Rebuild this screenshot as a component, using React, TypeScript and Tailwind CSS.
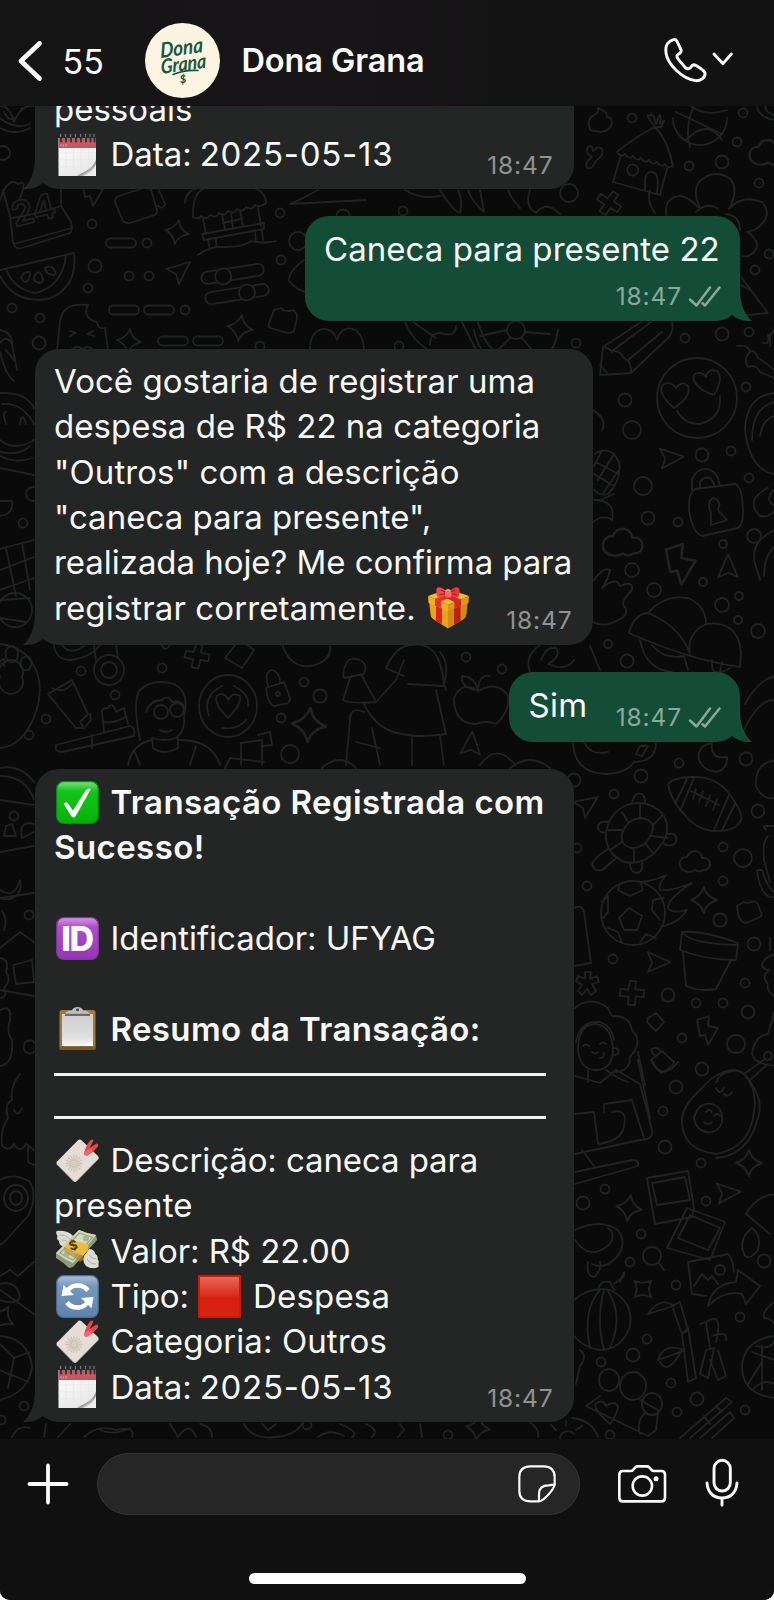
import React from "react";

/* ---------- wallpaper doodles ---------- */

const rings: [number, number, number][] = [
  [632, 118, 4.5], [743, 113, 4.5], [737, 142, 4.5], [689, 166, 4.5], [722, 162, 6.5], [759, 183, 4.5],
  [569, 193, 9], [769, 254, 4.5], [755, 270, 4.5], [722, 334, 6.5], [685, 338, 4.5], [749, 332, 4.5],
  [625, 400, 6.5], [746, 387, 4.5], [632, 430, 9], [576, 343, 4.5], [403, 211, 4.5], [343, 216, 6.5],
  [3, 153, 7], [92, 224, 4.5], [95, 266, 6.5], [88, 288, 4.5], [129, 276, 4.5], [149, 276, 4.5],
  [147, 243, 4.5], [185, 310, 4.5], [12, 308, 4.5], [40, 318, 4.5], [39, 343, 6.5], [280, 213, 4.5],
  [281, 260, 4.5], [298, 241, 9], [399, 346, 4.5], [260, 346, 4.5],
  [702, 455, 6.5], [731, 451, 4.5], [643, 486, 9], [749, 478, 4.5], [648, 518, 6.5], [678, 522, 4.5],
  [754, 536, 7], [723, 544, 4], [632, 570, 7], [703, 582, 4], [654, 590, 7], [722, 605, 7], [739, 596, 4],
  [738, 620, 4], [758, 631, 7], [608, 644, 4], [627, 661, 6.5], [466, 657, 4.5], [502, 669, 4.5],
  [304, 682, 4.5], [320, 696, 6.5], [281, 718, 4.5], [162, 668, 4.5], [81, 671, 4.5], [115, 695, 4.5],
  [46, 719, 4.5], [29, 735, 4.5], [23, 523, 4.5], [33, 494, 7], [290, 754, 9],
  [679, 763, 4.5], [641, 776, 6.5], [746, 759, 6.5], [614, 794, 4.5], [758, 811, 6.5], [723, 847, 4.5],
  [743, 858, 9], [723, 881, 4.5], [720, 920, 6.5], [587, 886, 4.5], [577, 848, 4.5], [613, 959, 4.5],
  [668, 995, 6.5], [696, 1003, 4.5], [723, 1003, 4.5], [745, 983, 4.5], [754, 944, 6.5], [748, 1012, 6.5],
  [682, 1038, 4.5], [736, 1044, 9], [702, 1069, 6.5], [574, 780, 6.5], [14, 816, 4.5], [29, 915, 4.5],
  [665, 1147, 6.5], [701, 1163, 4.5], [676, 1087, 6.5], [663, 1111, 4.5], [583, 1203, 6.5], [605, 1189, 4.5],
  [706, 1201, 4.5], [641, 1234, 4.5], [630, 1262, 4.5], [676, 1285, 4.5], [764, 1261, 6.5], [740, 1317, 4.5],
  [647, 1339, 4.5], [633, 1355, 6.5], [601, 1362, 4.5], [671, 1383, 4.5], [697, 1399, 6.5], [677, 1412, 4.5],
  [745, 1410, 4.5], [24, 1406, 4.5], [1, 1420, 4.5], [307, 1425, 4.5], [448, 1435, 4.5], [610, 1435, 4.5],
  [720, 1270, 5], [632.7, 170, 5.5], [30, 1047, 6.5],
];

const stars: [number, number, number, number][] = [
  [177, 232, 12, 10], [129, 341, 12, 5], [240, 328, 13, 8], [309, 725, 17, 5], [704, 900, 13, 0],
  [749, 1163, 13, 0], [629, 1208, 13, 8], [643, 1289, 12, 45], [478, 1428, 12, 8], [2, 1318, 13, 30],
];

const planes: [number, number, number][] = [
  [178, 272, 0], [668, 458, 35], [728, 570, -50], [585, 806, 5], [655, 962, 40], [725, 1193, 35], [471, 747, -45],
];

const pills: [number, number][] = [[106, 243], [109, 310], [144, 310], [158, 341], [193, 341]];

const bolts: [number, number, number][] = [[92, 192, 1], [680, 565, 1.4], [707, 1031, 1]];

const clouds: [number, number, number][] = [[768, 153, 1.2], [623, 543, 1.3], [695, 862, 1]];

const crosses: [number, number, number][] = [[609, 203, 35], [197, 656, 12], [632, 993, 5]];

const strokes: string[] = [
  // basketball
  "M673 118a27 27 0 1 0 54 0M676 112L722 134M700 96Q683 120 690 147M727 110Q705 118 688 104M722 140Q708 118 686 140",
  // hut
  "M617 152Q632 139 655 127Q668 140 673 167M617 152q4 6 8 2q4 6 8 2q4 6 8 2q4 6 8 2q4 6 8 2q4 6 8 2q4 6 8 1M621 155L613 182L660 195L667 169M645 190V178Q649 168 656 174Q659 180 657 193M655 127Q643 112 651 116Q652 110 656 124Q662 106 660 124Q668 116 661 127Z",
  // drop and bone
  "M590 129Q586 119 594 115Q599 113 598 108Q608 112 607 117Q614 118 611 126Q606 134 596 131Q590 131 590 129ZM588 147q4-3 5 4q5-6 9-2q3 5-6 12q-4 9-9 7q-3-5 5-11q-8-4-4-10",
  "M775 120Q760 118 757 107M775 116Q765 112 765 106",
  // flower
  "M700 208Q690 186 704 178Q716 170 729 178Q740 188 729 209M698 207Q680 188 668 202Q663 214 670 220M729 209Q742 194 762 202Q774 216 756 229Q744 233 748 232Q762 243 754 252Q748 258 742 256M696 212Q706 202 717 208M726 214q14 2 14 16",
  "M741 277L768 313L747 315M741 285L750 290",
  // pencil
  "M672 322Q674 330 669 337L631 373L600 375L603 347L641 322M651 322L612 351Q620 350 624 358Q632 362 631 373M662 332L628 360M603 347Q610 348 612 352M600 365L607 373",
  // love smiley
  "M657 398a40 40 0 1 0 80 0a40 40 0 1 0-80 0M674 408C662 398 658 388 664 384Q671 381 676 388Q682 380 688 386Q692 396 674 408ZM714 395C698 390 690 380 695 374Q702 371 706 377Q708 368 717 371Q724 378 714 395ZM677 411Q684 424 700 424Q722 418 720 396",
  // peppers and spiral
  "M737 346Q748 344 750 352Q743 358 748 367Q756 364 760 372L774 378M750 352Q754 348 758 358Q768 364 774 370M763 343Q770 345 768 335Q775 335 775 322M770 335V346",
  "M745 430Q746 396 774 393M752 440Q752 408 774 402M760 436Q762 420 774 416M745 430Q750 470 774 474",
  // chili and cloud above the first outgoing bubble
  "M440 190Q452 210 460 213Q463 200 458 190M468 190Q472 202 484 212L480 190M508 190Q512 200 520 208M530 190Q524 206 536 213Q546 200 560 214M655 213Q646 200 650 190M318 190Q300 200 290 204L366 200M405 190Q420 200 440 196",
  // left top
  "M0 118Q14 130 30 124M4 112Q12 128 22 108M0 106Q10 106 14 122Q22 104 33 106M0 128Q16 136 30 128M0 200Q8 176 18 184Q28 178 20 198",
  // desk calendar
  "M3 190L10 216L13 242Q15 250 22 248L70 233Q73 230 71 222L61 206V187M11 218Q30 216 61 206M14 244L72 228",
  // watermelon
  "M0 270L74 253Q78 288 48 299Q14 304 0 276M6 269Q14 290 36 293Q62 286 66 256M25 282q-6-3-2-8q5-3 7-2q0 9-5 10M40 283q-8-1-5-8q3-4 5-2q6 8 0 10M54 275q-8 0-9-7q3-2 7-1q6 6 2 8",
  "M119 196L150 186L157 210Q158 214 152 216L130 223Q124 224 122 219L115 202Q115 197 119 196ZM150 190q6-4 8-2l7 16q-2 6-7 2",
  // beach house
  "M193 217Q192 190 208 187M193 217q6 3 8-1q6 5 9-1q6 4 9-2q6 4 9-2q6 4 9-2q6 4 9-2q6 4 9-2q6 3 11-2Q266 192 254 188M203 219L206 234M258 208L261 226M202 234L264 223V229L204 240ZM208 240L210 250M216 238V247M255 230L256 241M262 229L263 240M222 214L225 230M231 212L233 229M240 210L243 226M223 223L241 219M198 255Q210 246 222 247Q240 248 252 241Q264 244 276 241M185 203Q186 190 198 188",
  // ice cream
  "M57 350L60 322Q62 302 88 305Q82 318 97 322Q98 330 105 328L108 350M70 331l6 2l-6 3M93 331l-6 3l7 2M72 349q6-4 10 0M82 349q6-4 10 0",
  // bag
  "M274 310L281 308Q284 313 293 310Q298 314 297 318L294 331Q291 334 284 332L270 328Q267 325 270 321Z",
  "M304 260Q288 272 289 281Q296 290 306 292",
  // corn leaf
  "M0 330Q12 332 12 344L17 370M0 343Q6 334 12 344M0 352Q6 376 14 381M6 350L14 360",
  // heart
  "M310 350Q310 332 322 329Q333 328 337 340Q342 324 356 330Q364 338 364 350",
  // wheel and pizza
  "M474 330Q480 356 494 360M558 330Q556 344 550 352M478 322Q486 350 500 352M507 330a9 9 0 1 0 18 0a9 9 0 1 0-18 0M507 330L480 336M525 332L550 334M510 338L498 350M522 338L532 350M405 322Q412 340 428 350M430 345Q430 330 444 334Q456 336 456 326M462 322L476 350M413 322L436 338",
  // left faces
  "M0 393Q26 392 34 408M2 404Q22 402 34 424M6 424Q2 412 6 412M20 424Q22 410 26 424M0 440Q14 452 34 440M0 452Q20 456 30 446M0 456Q16 464 32 458M0 468L34 475",
  "M0 501H12Q14 514 0 516",
  "M0 549L34 540M0 570L34 557M0 590L34 578M6 548L16 596M22 543L30 590M-2 610a17 17 0 1 0 34 0a17 17 0 1 0-34 0M2 600L30 598M0 618L26 622",
  // pinecone
  "M594 500Q616 500 612 520Q604 514 593 522M595 454Q610 444 619 462Q622 480 608 494Q600 496 594 490M596 462L618 474M594 474L614 486M602 450L594 466M614 454L598 480M620 468L604 492M600 500L614 494",
  "M593 410Q608 420 602 430",
  // padlock
  "M695 489L735 484Q742 486 743 508Q744 524 738 528L702 536Q692 532 689 510Q688 494 695 489ZM692 490V480Q696 468 708 469Q718 472 720 486M700 489V482Q704 476 710 478Q714 482 714 486M711 513Q706 502 713 498Q722 500 718 510L727 520L711 525Z",
  "M768 488Q744 500 760 516Q770 518 775 510M774 490Q764 500 775 506",
  // hand
  "M594 580Q604 566 610 570Q608 580 602 588Q616 576 620 586Q634 580 632 590Q618 604 626 608Q628 616 618 620Q604 628 593 622",
  // umbrella
  "M629 633Q634 614 648 613Q664 594 688 598Q706 606 706 624Q738 620 741 652L740 667Q690 660 629 633ZM648 613Q680 626 690 654M690 654Q686 634 706 624M640 640Q646 670 672 672M652 645Q664 660 684 656L688 670M712 660Q710 680 730 668M722 662L716 690",
  "M775 530Q752 540 754 560L760 580M775 546Q764 556 764 576",
  "M540 645Q524 656 530 672M541 660Q546 646 556 648Q562 656 548 664Q566 672 574 660M590 646L600 670",
  // paw
  "M0 677a12 12 0 1 0 22 0a12 12 0 1 0-22 0M0 662q6-8 4 4M6 650q8-8 12 2q0 12-8 10q-6-4-4-12M22 658q8-4 10 4q-2 10-8 8q-6-4-2-12M0 644Q20 646 30 660Q46 680 36 712Q24 746 0 748",
  // key ring and friends
  "M94 670a15 15 0 1 0 30 0a15 15 0 1 0-30 0M101 670a8 8 0 1 0 16 0a8 8 0 1 0-16 0M96 662L94 645M118 658L116 645M54 645Q56 660 70 660Q90 658 100 645M62 645Q70 656 84 646M162 645q2 8 8 0M236 644L225 658L242 668L254 650L246 644ZM282 644Q290 668 310 666Q332 662 330 645",
  // tube
  "M48 694L72 680L88 714L80 722L84 728L91 720L90 714M48 694L76 728L84 728M52 688Q64 694 72 684",
  "M56 745L130 726Q136 728 134 736L62 752Q54 752 56 745ZM92 735V748M104 732L102 712Q102 708 108 708Q112 700 116 712L124 708L128 724M103 722Q116 724 126 716",
  // man with glasses
  "M140 740Q132 700 140 690Q152 678 174 684Q190 692 184 716Q186 730 176 738Q164 742 152 738L153 748Q164 756 178 748V738M146 712Q150 700 162 700Q168 694 172 702Q180 700 184 706M154 712a7 7 0 1 0 14 0a7 7 0 1 0-14 0M170 710a6 6 0 1 0 14 0a6 6 0 1 0-14 0M160 730q6 4 12 0M128 765Q132 744 152 740M180 740Q212 740 220 765M134 750L140 765M196 746L190 765",
  // heart coin
  "M199 706a29 31 0 1 0 58 0a29 31 0 1 0-58 0M209 716Q202 696 222 686M234 686Q250 694 248 706M246 720Q238 730 222 728M228 718C214 704 214 696 220 694Q226 694 228 700Q232 692 240 696Q242 704 228 718Z",
  "M266 688L284 682L290 698Q290 704 284 704L274 706Q268 704 266 688ZM268 686Q264 672 272 670Q280 672 280 682M276 694a1.5 1.5 0 1 0 4 0a1.5 1.5 0 1 0-4 0",
  // standing figure
  "M346 665Q348 656 360 660Q368 664 364 674L344 678Q342 670 346 665ZM350 678L343 700Q350 704 376 702L362 676M386 668Q396 645 412 645M386 668L404 676M412 645Q440 640 444 684L446 690M408 684L444 686M376 702L396 680L404 660M364 704Q376 730 402 734Q420 738 446 734L436 690M444 684Q450 664 440 652M364 712Q350 706 350 720L346 765M372 728L380 765M412 736V765M440 736L444 765M356 742L380 748",
  // apple
  "M478 691Q462 680 454 698Q454 724 476 724Q486 720 496 724Q510 712 508 696Q498 680 478 691ZM478 690Q474 676 462 676Q460 686 474 690M478 688Q480 674 490 676",
  "M241 743L262 740V765M241 743V765M258 735L270 732L272 745L262 746M480 765Q492 748 506 756L516 765M745 704Q758 680 775 676M742 735Q756 700 775 700",
  // robot face, moon
  "M573 742Q574 774 608 774Q628 772 634 762Q656 762 656 742M584 742Q590 756 608 752M636 754L640 746L648 746L642 756ZM712 743Q696 746 699 760Q706 774 720 771Q728 766 727 757Q710 760 712 743Z",
  "M510 768Q530 752 550 768M322 768Q340 752 356 768M225 768L230 758L264 762",
  // football
  "M668 785Q670 778 692 777Q714 776 728 792Q744 814 741 820Q736 832 712 831Q694 828 684 814Q672 802 668 785ZM687 779L676 802M694 778L680 811M729 795L714 830M735 804L722 830M691 791L719 805M696 789L693 799M703 791L699 802M710 795L706 806M717 799L713 810",
  // turtle
  "M606 832Q610 810 630 804Q652 800 664 816Q672 832 660 846Q646 866 624 862Q604 852 606 832ZM622 834Q626 820 640 818Q656 820 652 832Q646 848 632 848Q620 846 622 834ZM640 818V804M652 826L663 815M652 836L668 838M646 844L652 852M634 848V862M622 842L610 850M622 830L607 830M628 822L622 812M632 803Q634 792 642 794Q646 798 645 804M608 822Q598 820 598 828Q600 834 606 832M668 834Q678 832 676 842Q672 848 664 844M630 863Q630 872 636 873Q644 872 642 862M608 849Q594 858 592 864Q594 872 602 870Q612 862 616 858",
  // burning ball
  "M601 913a32 32 0 1 0 64 0a32 32 0 1 0-64 0M629 908L642 916L637 930H624L619 918ZM620 884L618 890L630 896L643 890L640 882M602 902L608 896V912L603 918M664 898L653 900L652 910L660 920M608 928L618 932L622 943M656 938L646 934L640 942M642 882Q656 880 666 875Q658 884 660 890Q668 892 692 883Q668 898 668 908Q672 914 687 910Q680 922 664 926",
  "M737 906L744 902Q748 904 754 901Q758 902 760 910Q764 916 758 918L746 923Q740 922 738 914Z",
  // flower pot
  "M682 932Q702 930 738 943L736 960Q706 960 680 950ZM682 932Q690 944 738 945M683 952L686 986Q700 992 716 989L731 960",
  "M574 908Q582 904 584 912L591 963L574 966",
  // girl with curly hair
  "M572 1010Q590 994 608 1008Q612 1018 614 1016Q630 1016 632 1030Q642 1040 634 1052Q628 1058 630 1062Q626 1072 616 1072M578 1050Q578 1024 596 1024Q612 1026 613 1050Q612 1070 596 1070Q580 1070 578 1050M576 1042Q580 1020 600 1022Q612 1026 614 1040M583 1046q3-3 6 0M600 1044q3-3 6 0M592 1052q4 3 6 0M600 1058q4 1 4-5M614 1048q6 0 4 6q-4 2-5 0M638 1052L645 1085M588 1070V1082M606 1070Q620 1080 628 1082",
  "M648 1018L656 1013L664 1022L656 1031L647 1022ZM651 1060L662 1051L674 1062Q674 1066 662 1073Q656 1070 651 1060ZM656 1056Q648 1050 654 1048Q660 1048 661 1052",
  // right edge bottle, bananas, grapes
  "M775 760Q754 764 756 786Q762 800 775 798M766 830Q762 826 766 826H775M768 836Q762 842 764 860L770 882M757 870Q760 898 775 898M757 870H762Q768 890 775 892M770 938V950M775 954Q762 958 762 966Q764 970 770 970Q760 976 768 984Q766 992 775 996M775 1010L768 1034Q754 1036 752 1054Q754 1064 775 1066M764 1056a4 4 0 1 0 8 0a4 4 0 1 0-8 0M764 1060L744 1074M768 1064L750 1080M716 1082Q722 1070 738 1071Q748 1074 752 1085",
  // avocado
  "M720 1074Q734 1066 744 1074Q758 1090 754 1112Q750 1148 716 1154Q684 1150 682 1124Q680 1108 700 1090Q712 1076 720 1074ZM694 1118Q698 1102 712 1104Q724 1108 722 1122Q718 1134 706 1132Q696 1130 694 1118M706 1112q3-4 6 0M714 1116q3-4 6 0M704 1122q4 4 8 0M716 1088q4 8 8 0M724 1094q4 4 8-2M750 1082Q764 1100 758 1118Q748 1156 716 1158",
  // laptop
  "M575 1076L600 1083L616 1070L640 1084L652 1130Q654 1140 640 1140L575 1154M575 1114L594 1112L598 1144M604 1112V1104L632 1100L644 1138M612 1112Q628 1108 624 1126Q622 1140 600 1144M582 1150L594 1166M575 1172L632 1160Q640 1160 638 1166L575 1184M638 1060L650 1118M652 1060Q662 1082 678 1062",
  // polaroids
  "M647 1178L688 1171L694 1208L692 1217L655 1224ZM652 1183L685 1177L690 1200L657 1205ZM687 1208L725 1222L710 1260L667 1248ZM690 1215L720 1228L708 1250L678 1238Z",
  "M643 1256a9 9 0 1 0 18 0a9 9 0 1 0-18 0M659 1263L664 1270",
  // planet
  "M575 1230Q600 1218 618 1230Q628 1244 616 1258Q604 1270 592 1264M575 1240Q590 1262 610 1244Q616 1234 608 1228M588 1262Q586 1276 594 1277Q602 1270 600 1262",
  // photo with arrow
  "M688 1262L728 1254Q732 1256 734 1272M688 1262L692 1294L706 1296M694 1286L702 1274L708 1280L712 1276L718 1284M708 1306Q712 1284 736 1282L738 1270L760 1286L746 1304L742 1294Q724 1290 708 1306Z",
  // lantern
  "M574 1300Q590 1286 610 1290Q634 1302 630 1326Q622 1350 600 1350Q584 1348 574 1336M600 1290Q582 1310 590 1348M604 1290Q596 1320 604 1350M608 1291Q624 1316 610 1348M598 1290Q600 1280 610 1282L614 1290M614 1284L624 1276Q626 1266 620 1282M580 1350Q588 1356 580 1366L576 1384",
  // bamboo
  "M672 1306L680 1302L688 1330L682 1334ZM682 1334L688 1328L696 1378L688 1382ZM648 1314Q660 1296 674 1306Q660 1310 648 1314ZM706 1350L714 1348L708 1378L700 1374ZM700 1324L706 1322L710 1348M716 1342Q724 1310 706 1322M712 1336Q728 1330 726 1340M658 1360Q664 1342 684 1350Q676 1354 658 1360ZM660 1362Q668 1376 682 1350M718 1350L726 1376L718 1380L710 1360",
  "M774 1336Q744 1340 742 1366Q742 1394 774 1398M752 1352L774 1360M748 1384L762 1362M756 1346Q770 1350 774 1342M752 1390Q764 1378 774 1384M762 1346V1390",
  // beads, heart bag, chopsticks
  "M599 1380a10 11 0 1 0 20 0a10 11 0 1 0-20 0M620 1386a13 14 0 1 0 26 0a13 14 0 1 0-26 0M642 1404a10 11 0 1 0 20 0a10 11 0 1 0-20 0M586 1406L600 1396M586 1406L648 1436L656 1430L658 1410L640 1400M610 1424C596 1412 592 1404 598 1402Q604 1400 606 1406Q614 1400 618 1406Q618 1412 610 1424ZM640 1434Q636 1420 646 1412M680 1438L726 1398L732 1402L690 1438M700 1438L730 1412L734 1418L712 1438M716 1406L722 1412M704 1416L710 1424",
  "M775 1194Q756 1196 746 1214L770 1234M744 1254Q738 1238 752 1228Q762 1236 758 1250Q748 1262 744 1254M775 1302Q762 1310 764 1318Q770 1318 775 1324",
  // left column, lower half
  "M0 768Q20 764 34 782M0 776Q26 776 34 800M0 800L34 805M0 852L34 846M22 838Q18 820 34 824M22 838L34 832M6 826L12 824L16 836H4ZM0 890Q14 900 20 880Q22 888 18 894Q10 902 0 898M0 898L34 893M2 911Q8 920 4 930M0 948L20 932L34 942M13 965L32 960L34 982L16 984ZM0 958Q10 960 6 972Q12 980 4 988Q8 998 0 998M0 990L34 996M0 1010Q12 1004 10 1020Q6 1032 12 1040Q14 1064 0 1066",
  "M20 1074Q10 1086 12 1100Q4 1104 8 1118Q0 1130 2 1146Q10 1152 14 1144Q20 1154 26 1144L34 1150M14 1110q4 8 8-2M28 1148V1162L34 1165",
  "M0 1180Q14 1172 30 1182Q38 1196 28 1216L6 1240Q0 1246 0 1244M4 1198a12 13 0 1 0 24 0a12 13 0 1 0-24 0M10 1198a6 7 0 1 0 12 0a6 7 0 1 0-12 0",
  "M0 1276L10 1270L18 1276L34 1262M0 1284Q16 1280 20 1296Q18 1306 0 1300M0 1290L34 1314",
  "M0 1336Q28 1338 32 1366Q30 1392 0 1400M0 1344L14 1358L8 1388M14 1358L30 1352M10 1374L28 1382M0 1370L12 1376",
  // bottom sliver
  "M12 1437Q18 1424 30 1428M44 1437L46 1424M58 1437L70 1424M84 1437Q98 1424 116 1430Q136 1426 132 1437M100 1430Q114 1436 130 1428M170 1424L178 1437Q190 1420 196 1437M200 1424Q212 1426 212 1437M244 1424Q252 1440 276 1437Q294 1436 302 1424M262 1424L268 1430L276 1424M318 1437Q330 1428 344 1436M340 1424Q360 1432 352 1437M366 1424Q380 1430 372 1437M398 1437L404 1430L400 1424M420 1424L422 1437M530 1422Q540 1430 538 1437M572 1418Q592 1420 598 1437M560 1438a8 8 0 0 1 14-4M566 1426V1421M556 1430L551 1425M576 1430L582 1426",
];

function Wallpaper() {
  return (
    <svg
      className="absolute left-0 top-0 h-[1600px] w-[774px]"
      viewBox="0 0 774 1600"
      fill="none"
      stroke="#212222"
      strokeWidth="1.8"
      strokeLinecap="round"
      strokeLinejoin="round"
      aria-hidden="true"
    >
      {rings.map(([x, y, r], i) => (
        <circle key={i} cx={x} cy={y} r={r} />
      ))}
      {stars.map(([x, y, s, r], i) => (
        <path
          key={i}
          transform={`translate(${x} ${y}) rotate(${r}) scale(${s / 12})`}
          d="M0-12Q2-3 12 0Q2 3 0 12Q-3 3-12 0Q-3-3 0-12Z"
        />
      ))}
      {planes.map(([x, y, r], i) => (
        <path key={i} transform={`translate(${x} ${y}) rotate(${r})`} d="M12-10L1 12L-2 2L-12-3Z" />
      ))}
      {pills.map(([x, y], i) => (
        <rect key={i} x={x} y={y - 4.5} width="30" height="9" rx="4.5" />
      ))}
      {bolts.map(([x, y, s], i) => (
        <path key={i} transform={`translate(${x} ${y}) scale(${s})`} d="M-10-11L2-15L1-5L11-3L1 14L-2 4L-7 5Z" />
      ))}
      {clouds.map(([x, y, s], i) => (
        <path
          key={i}
          transform={`translate(${x} ${y}) scale(${s})`}
          d="M-10 9Q-17 6-15-1Q-12-6-8-5Q-6-11 1-11Q7-9 7-4Q15-5 15 3Q14 8 8 8Q4 11 0 8Q-5 11-10 9Z"
        />
      ))}
      {crosses.map(([x, y, r], i) => (
        <path
          key={i}
          transform={`translate(${x} ${y}) rotate(${r})`}
          d="M-3-12H3V-4H12V3H4V12H-3V4H-12V-3H-4Z"
        />
      ))}
      <path d="M585 972h6l-1 7l7-3l2 6l-7 2l4 7l-5 4l-4-6l-5 6l-4-4l4-6l-6-4l2-5l7 3Z" />
      <g transform="rotate(-9 232 274)">
        <rect x="201" y="268" width="63" height="12" rx="6" />
        <circle cx="223" cy="275" r="8" fill="#0a0a0a" />
      </g>
      <g transform="rotate(-9 237 294)">
        <rect x="205" y="288" width="64" height="12" rx="6" />
        <circle cx="247" cy="294" r="8" fill="#0a0a0a" />
      </g>
      {strokes.map((d, i) => (
        <path key={i} d={d} />
      ))}
      <text
        transform="translate(15 227) rotate(-14)"
        fontFamily="Inter, sans-serif"
        fontWeight="700"
        fontSize="34"
        strokeWidth="1.6"
      >
        24
      </text>
    </svg>
  );
}

/* ---------- emoji drawings ---------- */

const emojiBox = "block h-[43px] w-[43px] shrink-0";
const coilPositions = [5, 10, 15, 20, 25, 30, 34.5, 38.5];

function CalendarEmoji() {
  return (
    <svg className={emojiBox} viewBox="0 0 43 43">
      <defs>
        <linearGradient id="page" x1="0" y1="0" x2="0.4" y2="1">
          <stop offset="0" stopColor="#ffffff" />
          <stop offset="1" stopColor="#e9e9e9" />
        </linearGradient>
        <linearGradient id="curl" x1="0.2" y1="0.2" x2="0.8" y2="0.9">
          <stop offset="0" stopColor="#4f4f4f" />
          <stop offset="0.5" stopColor="#8f8f8f" />
          <stop offset="1" stopColor="#e4e4e4" />
        </linearGradient>
      </defs>
      <rect x="2.5" y="5" width="37.5" height="38" fill="url(#page)" />
      <path d="M2.5 20H40M2.5 27H40M2.5 34H40M10 14V43M17.5 14V43M25 14V43M32.5 14V40" stroke="#e6e6e6" strokeWidth="0.7" />
      <path d="M40 27C36 37 28 38 21 43H40Z" fill="url(#curl)" />
      <path d="M40 31C37 38 33 40 27 43H40Z" fill="#ececec" />
      <rect x="2.5" y="5" width="37.5" height="10" fill="#c25960" />
      <path d="M5 13.500V11M7.500 13.500V11.500M10 13.500V11" stroke="#dca4a6" strokeWidth="1" />
      {coilPositions.map((x) => (
        <path key={x} d={`M${x} 8.5V1`} stroke="#2b3236" strokeWidth="1.9" strokeLinecap="round" />
      ))}
      {coilPositions.map((x) => (
        <path key={x} d={`M${x - 0.6} 4V1`} stroke="#8b979b" strokeWidth="0.8" />
      ))}
    </svg>
  );
}

function GiftEmoji() {
  return (
    <svg className={emojiBox} viewBox="0 0 43 43">
      <path d="M2 14L21 22V42.500L6 33Q3.500 31 3.500 28Z" fill="#e9a21c" />
      <path d="M41 14L21 22V42.500L37 33Q39.500 31 39.500 28Z" fill="#d18a10" />
      <path d="M9 18L15 20.500V38.500L9 35Z" fill="#d8261d" />
      <path d="M27 20L33.500 17.500V35L27 38.800Z" fill="#c01f18" />
      <path d="M1 10L21 3L42 10L21 19Z" fill="#f4b93a" />
      <path d="M1 10L21 19V25L1.500 17Z" fill="#f0ae2b" />
      <path d="M42 10L21 19V25L41.500 17Z" fill="#dd9616" />
      <path d="M8 12.700L14 15.500V22L8 19.700ZM8 12.700L28 5L33 6.800L14 15.500Z" fill="#e3342a" />
      <path d="M27.500 16L34 13.500V20L27.500 22.500ZM34 13.500L14 5.500L9 7.500L27.500 16Z" fill="#d2281f" />
      <path d="M21 7C15 0 9 0 9.500 4C9 8 10 11 12 11.500C15 11.500 19 9.500 21 8Z" fill="#f0494a" />
      <path d="M21 7C27 0 32 0 32.500 4C33 8 32 11 30 11.500C27 11.500 23 9.500 21 8Z" fill="#e6383b" />
      <path d="M12 9L20 7L14 4M30 9L22 7L28 4" stroke="#b3161c" strokeWidth="1.200" fill="none" />
      <rect x="18" y="4.500" width="6.500" height="7" rx="2.500" fill="#f8696b" />
    </svg>
  );
}

function CheckEmoji() {
  return (
    <svg className={emojiBox} viewBox="0 0 43 43">
      <defs>
        <linearGradient id="green" x1="0" y1="0" x2="0" y2="1">
          <stop offset="0" stopColor="#7be07d" />
          <stop offset="0.22" stopColor="#17c41c" />
          <stop offset="1" stopColor="#06b206" />
        </linearGradient>
      </defs>
      <rect x="0.7" y="0.7" width="41.6" height="41.6" rx="7" fill="url(#green)" stroke="#0c8b22" strokeWidth="1.2" />
      <path d="M8 23Q10.500 20 12 23L17 30L30 9.500Q32 7.500 34.500 8L19.500 35Q17.500 37.500 15.500 35Z" fill="#fff" stroke="#fff" strokeWidth="0.6" />
    </svg>
  );
}

function IdEmoji() {
  return (
    <svg className={emojiBox} viewBox="0 0 43 43">
      <defs>
        <linearGradient id="purple" x1="0" y1="0" x2="0" y2="1">
          <stop offset="0" stopColor="#d59be4" />
          <stop offset="0.22" stopColor="#b04ccb" />
          <stop offset="1" stopColor="#9336b3" />
        </linearGradient>
      </defs>
      <rect x="0.7" y="0.7" width="41.6" height="41.6" rx="7" fill="url(#purple)" stroke="#7d3a98" strokeWidth="1.2" />
      <text x="21" y="34" textAnchor="middle" fontFamily="Inter, sans-serif" fontWeight="800" fontSize="34" letterSpacing="-1.5" fill="#fff">
        ID
      </text>
    </svg>
  );
}

function ClipboardEmoji() {
  return (
    <svg className={emojiBox} viewBox="0 0 43 43">
      <defs>
        <linearGradient id="sheet" x1="0" y1="0" x2="0" y2="1">
          <stop offset="0" stopColor="#cfcfcf" />
          <stop offset="0.7" stopColor="#dedede" />
          <stop offset="1" stopColor="#f7f7f7" />
        </linearGradient>
      </defs>
      <rect x="3.5" y="3" width="36" height="40" rx="2.5" fill="#a8763a" />
      <rect x="3.5" y="39.5" width="36" height="3.5" rx="1.5" fill="#7d5527" />
      <rect x="6" y="7" width="31" height="32" fill="url(#sheet)" />
      <path d="M37 39H26L37 34Z" fill="#fff" />
      <path d="M9 8.500V7Q10 3.500 16 3.500Q17 0 21.500 0Q26 0 27 3.500Q33 3.500 34 7V8.500Z" fill="#b9bec1" />
      <rect x="9" y="6.8" width="25" height="2.2" fill="#6f6a63" />
      <circle cx="21.5" cy="2.7" r="1.5" fill="#4b4b4b" />
    </svg>
  );
}

function TagEmoji() {
  return (
    <svg className={emojiBox} viewBox="0 0 43 43">
      <path d="M22.500 0.800Q24 0 25.500 1.200L42 17Q43.200 18.500 42.400 19.800L20.500 42Q19 43 17.500 42L0.800 25Q0 23.500 1 22.500Z" fill="#e6ddd6" />
      <path d="M0.800 25L17.500 42Q19 43 20.500 42L42.400 19.800" fill="none" stroke="#cfc4bb" strokeWidth="1" />
      <path
        d="M18 16.500V32.500M10 24.500H26M12.300 18.800L23.700 30.200M23.700 18.800L12.300 30.200M15 17L21 32M21 17L15 32M10.700 21.500L25.300 27.500M25.300 21.500L10.700 27.500"
        stroke="#cfc4b8"
        strokeWidth="1.3"
        strokeLinecap="round"
      />
      <circle cx="18" cy="24.5" r="2.7" fill="#d8cdc2" />
      <path d="M28.500 13Q30 6 34.500 1Q36.500 0 37.500 1.500L33.500 9L40.500 4.500Q43 5.500 42 7.500Q38 13 31.500 16.500Q27 17 28.500 13Z" fill="#e5484d" />
      <path d="M28 14.500Q31 10 36 10.500Q37 13 31.500 16.500Q28 17.500 28 14.500Z" fill="#f6686c" />
    </svg>
  );
}

function MoneyEmoji() {
  return (
    <svg className={emojiBox} viewBox="0 0 43 43">
      <path d="M0.500 2Q9 1 15 5Q20 9 19 15L14 20Q9 20 6 17Q3 16 3 12Q0 10 1.500 7Q-0.500 4 0.500 2Z" fill="#dcdcd2" />
      <path d="M3 6Q9 5 14 10M5 11Q9 10 13 14M8 16Q11 14 14 17" stroke="#aeb0a6" strokeWidth="1" fill="none" />
      <path d="M42.500 38Q36 41 30 37Q26 33 28 27L33 20Q38 20 39.500 25Q42.500 27 41.500 30Q43.500 32 42.500 34.500Z" fill="#dcdcd2" />
      <path d="M40 35Q34 35 31 30M40 30Q36 30 33 26" stroke="#aeb0a6" strokeWidth="1" fill="none" />
      <path d="M23 1Q32 5 40 6L41 11L17 38L13 39Q7 33 0 29V24Z" fill="#8d9c78" />
      <path d="M23 1Q32 5 40 6L17 34Q8 30 0 24Z" fill="#d3d9bf" />
      <path d="M23.500 4Q31 7 36.500 8L17 31Q10 28 4 24Z" fill="none" stroke="#8fa07c" strokeWidth="1.100" />
      <circle cx="30" cy="9.5" r="3" fill="#a5b592" />
      <circle cx="10.5" cy="25.5" r="2.8" fill="#a5b592" />
      <path d="M14.500 10.500L32.500 15.500L32 21L27 27L8.500 18Z" fill="#e9bd43" />
      <path d="M8.500 18L27 27V31L24 33L8 22Z" fill="#b98a24" opacity="0.65" />
      <text transform="translate(14.5 22) rotate(-18)" fontFamily="Inter, sans-serif" fontWeight="700" fontSize="13" fill="#4a3b14">
        $
      </text>
    </svg>
  );
}

function CycleEmoji() {
  return (
    <svg className={emojiBox} viewBox="0 0 43 43">
      <defs>
        <linearGradient id="steel" x1="0" y1="0" x2="0" y2="1">
          <stop offset="0" stopColor="#a9c0da" />
          <stop offset="0.25" stopColor="#7896bb" />
          <stop offset="1" stopColor="#5f84ae" />
        </linearGradient>
      </defs>
      <rect x="0.7" y="0.7" width="41.6" height="41.6" rx="7" fill="url(#steel)" stroke="#4b6f98" strokeWidth="1.2" />
      <path d="M10.500 18C14 9 26 8 32 15.500" stroke="#fff" strokeWidth="4.600" fill="none" />
      <path d="M5.500 21L7.500 9.800L18 20Z" fill="#fff" />
      <path d="M32.500 25C29 34 17 35 11 27.500" stroke="#fff" strokeWidth="4.600" fill="none" />
      <path d="M37.500 22L35.500 33.200L25 23Z" fill="#fff" />
    </svg>
  );
}

function RedSquareEmoji() {
  return (
    <svg className={emojiBox} viewBox="0 0 43 43">
      <defs>
        <linearGradient id="red" x1="0" y1="0" x2="0" y2="1">
          <stop offset="0" stopColor="#e8675a" />
          <stop offset="0.45" stopColor="#db2f1f" />
          <stop offset="0.55" stopColor="#d5200f" />
          <stop offset="1" stopColor="#d8220f" />
        </linearGradient>
      </defs>
      <rect x="0" y="0" width="43" height="43" rx="1" fill="#c91a0c" />
      <rect x="2" y="2" width="39" height="39" fill="url(#red)" />
    </svg>
  );
}

/* ---------- chat pieces ---------- */

function Tail({ side }: { side: "in" | "out" }) {
  return (
    <svg
      className={
        side === "out"
          ? "absolute -right-[12px] bottom-0 h-[36px] w-[36px] text-[#144d37]"
          : "absolute -left-[12px] bottom-0 h-[36px] w-[36px] -scale-x-100 text-[#242626]"
      }
      viewBox="0 0 36 36"
      fill="currentColor"
      aria-hidden="true"
    >
      <path d="M0 0H24V4C24 18 28 29 36 36C29 36.500 21 34.500 16 30L8 24Z" />
    </svg>
  );
}

function Time({ className = "" }: { className?: string }) {
  return (
    <span className={`whitespace-nowrap text-[24.5px] leading-[25px] tracking-[0.9px] ${className}`}>18:47</span>
  );
}

function Ticks() {
  return (
    <svg className="block h-[22px] w-[33px]" viewBox="0 0 33 22" fill="none" stroke="#8aa99b" strokeWidth="2.5" strokeLinecap="round" strokeLinejoin="round">
      <path d="M2 13.500L8.500 19.500L22 1.500" />
      <path d="M14.500 17.300L17 19.500L31.500 1.500" />
    </svg>
  );
}

function Line({ children, className = "" }: { children?: React.ReactNode; className?: string }) {
  return <div className={`flex h-[45.35px] items-center whitespace-nowrap ${className}`}>{children}</div>;
}

function IconLine({ icon, children, className = "" }: { icon: React.ReactNode; children: React.ReactNode; className?: string }) {
  return (
    <Line className="gap-[12px] pl-[1.5px]">
      <span className="-mt-px">{icon}</span>
      <span className={className}>{children}</span>
    </Line>
  );
}

function DateLine() {
  return (
    <div className="flex items-end justify-between">
      <IconLine icon={<CalendarEmoji />}>
        Data: <span className="-ml-[1.5px] tracking-[0.75px]">2025-05-13</span>
      </IconLine>
      <Time className="-mb-px text-[#919292]" />
    </div>
  );
}

const incoming =
  "relative ml-[34.5px] rounded-[24px] bg-[#242626] pl-[19.5px] pr-[20.5px] text-[33px] leading-[45.35px] text-[#f7f8f8]";
const outgoing =
  "relative ml-auto mr-[34px] rounded-[24px] bg-[#144d37] text-[33px] leading-[45.35px] text-[#f7f8f8]";

export default function App() {
  return (
    <div className="relative h-[1600px] w-[774px] overflow-hidden bg-white font-['Inter','Liberation_Sans',sans-serif]">
      <div className="flex h-full flex-col overflow-hidden rounded-b-[10px] bg-[#0a0a0a]">
        <Wallpaper />

        <header className="relative z-10 flex h-[106px] shrink-0 items-center bg-gradient-to-r from-[#151415] via-[#171517] via-40% to-[#111111] pt-[15px] text-[#fafafa]">
          <svg className="ml-[16px] h-[42px] w-[28px]" viewBox="0 0 28 42" fill="none" stroke="currentColor" strokeWidth="4.8" strokeLinecap="round" strokeLinejoin="round">
            <path d="M23.500 3.500L5 21L23.500 38.500" />
          </svg>
          <span className="ml-[18.5px] mt-[2px] w-[42px] whitespace-nowrap text-[34px] leading-[42px]">55</span>
          <div className="ml-[40px] h-[75px] w-[75px] overflow-hidden rounded-full bg-[#fdf5e2]">
            <svg viewBox="0 0 75 75" className="h-full w-full" fill="#17573f">
              <g fontFamily="Lato, sans-serif" fontStyle="italic" fontWeight="700">
                <text transform="translate(15.5 35) rotate(-8) skewX(-6)" fontSize="21" textLength="43" lengthAdjust="spacingAndGlyphs">
                  Dona
                </text>
                <text transform="translate(16 51) rotate(-8) skewX(-6)" fontSize="20" textLength="46" lengthAdjust="spacingAndGlyphs">
                  Grana
                </text>
                <text x="35" y="60" fontSize="10.5" fontWeight="900" fontStyle="normal">
                  $
                </text>
              </g>
              <path d="M28 51.500Q40 46.500 53 47.500" fill="none" stroke="#17573f" strokeWidth="1.600" strokeLinecap="round" />
            </svg>
          </div>
          <h1 className="ml-[22px] mt-px whitespace-nowrap text-[32.5px] font-semibold leading-[42px] tracking-[-0.1px]">Dona Grana</h1>
          <svg className="ml-auto mr-[39px] h-[46.67px] w-[71.67px]" viewBox="190 50 215 140" fill="none" stroke="currentColor" strokeWidth="8.8" strokeLinecap="round" strokeLinejoin="round">
            <path d="M222 58C204 62 196 78 199 98C204 131 246 176 288 181C306 182 318 170 316 158C314 152 298 141 288 135C282 132 278 133 274 140C270 147 262 147 257 142L236 117C229 110 231 104 238 100C245 96 246 91 243 86L232 63C229 58 226 57 222 58Z" />
            <path d="M343 101L370 130L395 101" />
          </svg>
        </header>

        <main className="relative flex h-[1332.5px] shrink-0 flex-col overflow-hidden">
          <div className={`${incoming} -mt-[26px] h-[109px] w-[539.5px] pt-[6.5px]`}>
            <Tail side="in" />
            <div className="relative">
              <Line>pessoais</Line>
              <DateLine />
            </div>
          </div>

          <div className={`${outgoing} mt-[27px] h-[105px] w-[435px] pl-[19px] pt-[10.5px]`}>
            <Tail side="out" />
            <div className="relative">
              <Line className="tracking-[0.06px]">Caneca para presente 22</Line>
              <div className="mr-[19px] mt-[12.5px] flex items-center justify-end gap-[6px]">
                <Time className="text-[#8aa99b]" />
                <Ticks />
              </div>
            </div>
          </div>

          <div className={`${incoming} mt-[28px] h-[295.5px] w-[558.5px] pt-[10px]`}>
            <Tail side="in" />
            <div className="relative">
              <Line className="tracking-[0.04px]">Você gostaria de registrar uma</Line>
              <Line className="tracking-[0.02px]">despesa de R$ 22 na categoria</Line>
              <Line className="tracking-[0.09px]">"Outros" com a descrição</Line>
              <Line className="tracking-[0.03px]">"caneca para presente",</Line>
              <Line className="tracking-[-0.05px]">realizada hoje? Me confirma para</Line>
              <div className="flex items-end justify-between">
                <Line className="gap-[11px] tracking-[0.11px]">
                  <span>registrar corretamente.</span>
                  <span className="-mt-[2px]">
                    <GiftEmoji />
                  </span>
                </Line>
                <Time className="-mb-[1.5px] text-[#919292]" />
              </div>
            </div>
          </div>

          <div className={`${outgoing} mt-[27.5px] flex h-[70px] w-[231px] pl-[19.5px] pr-[19px] pt-[11px]`}>
            <Tail side="out" />
            <div className="relative flex h-[45.35px] w-full items-end">
              <Line className="tracking-[0.3px]">Sim</Line>
              <div className="-mb-[2px] ml-auto flex items-center gap-[6px]">
                <Time className="text-[#8aa99b]" />
                <Ticks />
              </div>
            </div>
          </div>

          <div className={`${incoming} mt-[27px] h-[653px] w-[539.5px] pt-[11px]`}>
            <Tail side="in" />
            <div className="relative">
              <IconLine icon={<CheckEmoji />} className="font-semibold tracking-[0.42px]">
                Transação Registrada com
              </IconLine>
              <Line className="font-semibold tracking-[0.42px]">Sucesso!</Line>
              <Line />
              <IconLine icon={<IdEmoji />} className="tracking-[-0.03px]">
                Identificador: UFYAG
              </IconLine>
              <Line />
              <IconLine icon={<ClipboardEmoji />} className="font-semibold tracking-[0.36px]">
                Resumo da Transação:
              </IconLine>
              <div className="-ml-[0.5px] flex h-[85.9px] w-[492px] flex-col gap-[40px] pt-[20.900px]">
                <div className="h-[3px] bg-[#f1f2f2]" />
                <div className="h-[3px] bg-[#f1f2f2]" />
              </div>
              <IconLine icon={<TagEmoji />} className="tracking-[-0.1px]">
                Descrição: caneca para
              </IconLine>
              <Line className="tracking-[0.2px]">presente</Line>
              <IconLine icon={<MoneyEmoji />} className="tracking-[-0.06px]">
                Valor: R$ 22.00
              </IconLine>
              <Line className="gap-[12px] pl-[1.5px]">
                <span className="-mt-px">
                  <CycleEmoji />
                </span>
                <span className="-mr-[2.5px] tracking-[-0.07px]">Tipo:</span>
                <span className="-mt-px">
                  <RedSquareEmoji />
                </span>
                <span className="-ml-[0.5px] tracking-[0.2px]">Despesa</span>
              </Line>
              <IconLine icon={<TagEmoji />} className="tracking-[0.07px]">
                Categoria: Outros
              </IconLine>
              <DateLine />
            </div>
          </div>
        </main>

        <footer className="relative flex flex-1 flex-col items-center bg-[#101010] pt-[14.5px]">
          <div className="flex h-[62px] w-full items-center text-[#fafafa]">
            <svg className="ml-[27px] h-[42px] w-[42px]" viewBox="0 0 42 42" stroke="currentColor" strokeWidth="3.8" strokeLinecap="round">
              <path d="M21 2.500V39.500M2.500 21H39.500" />
            </svg>
            <div className="ml-[28px] flex h-[62px] w-[483px] items-center justify-end rounded-full border border-[#343434] bg-[#262626] pr-[22px]">
              <svg className="h-[40px] w-[40px]" viewBox="51 60 120 120" fill="none" stroke="currentColor" strokeWidth="6.5" strokeLinecap="round" strokeLinejoin="round">
                <path d="M164 120V100C164 77 152 67 130 67H92C68 67 58 79 58 99V140C58 162 70 172 92 172H117C128 172 164 136 164 120Z" />
                <path d="M117 171V150C117 132 128 124 145 124L163 122" />
              </svg>
            </div>
            <svg className="ml-[37px] h-[40px] w-[50px]" viewBox="351 59 150 120" fill="none" stroke="currentColor" strokeWidth="7.8" strokeLinecap="round" strokeLinejoin="round">
              <path d="M358 91Q358 80 369 80H392Q397 80 400 76L406 69Q409 66 413 66H441Q445 66 448 69L454 76Q457 80 462 80H484Q495 80 495 91V160Q495 171 484 171H369Q358 171 358 160Z" />
              <circle cx="427" cy="125" r="29" />
              <circle cx="468" cy="103" r="7.5" fill="currentColor" stroke="none" />
            </svg>
            <svg className="-mt-[3px] ml-[37px] h-[50px] w-[36px]" viewBox="613 41 108 150" fill="none" stroke="currentColor" strokeWidth="8.8" strokeLinecap="round" strokeLinejoin="round">
              <rect x="643" y="48" width="49" height="92" rx="24.5" />
              <path d="M622 116C624 145 642 161 667 161C692 161 710 145 712 116M667 161V183" />
            </svg>
          </div>
          <div className="mt-[58px] h-[11px] w-[277px] rounded-full bg-white" />
        </footer>
      </div>
    </div>
  );
}
